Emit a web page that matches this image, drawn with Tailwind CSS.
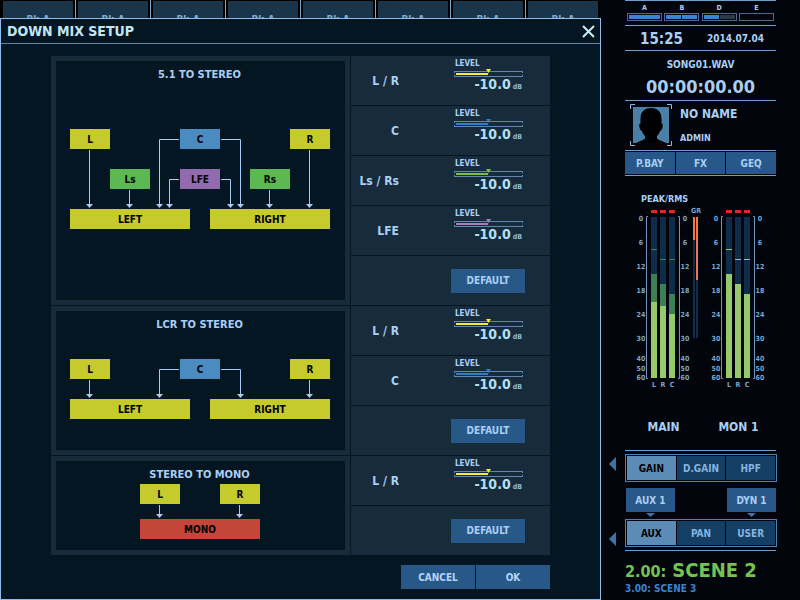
<!DOCTYPE html>
<html lang="en">
<head>
  <meta charset="UTF-8">
  <meta name="viewport" content="width=device-width, initial-scale=1.0">
  <title>Down Mix Setup</title>
  <script src="https://cdn.jsdelivr.net/npm/@tailwindcss/browser@4"></script>
</head>
<body class="min-h-screen flex bg-[#02060c] text-[#a9cff5] font-bold leading-none font-['DejaVu_Sans_Condensed','DejaVu_Sans',sans-serif]">

  <!-- Channel strip and dialog -->
  <div class="flex-1 min-w-0 flex flex-col">
    <div id="channels" class="grid grid-cols-8 h-[18px] mr-px overflow-hidden bg-black text-[10px] text-[#7fa9d0]"></div>

    <main class="flex-1 flex flex-col bg-[#051623] border border-[#8fbcea]">
      <header class="flex items-center justify-between h-[25px] pl-[6px] pr-[5px] border-b border-[#6186ad]">
        <h1 class="text-[14px] text-[#c3e6f5]">DOWN MIX SETUP</h1>
        <button type="button" aria-label="Close">
          <svg class="block w-[13px] h-[13px]" viewBox="0 0 13 13" fill="none" stroke="#c8ecf8" stroke-width="2">
            <path d="M1 1L12 12M12 1L1 12"/>
          </svg>
        </button>
      </header>

      <div class="w-[499px] mx-auto pt-[12px]">
        <!-- 5.1 to stereo -->
        <section class="flex border-b border-[#051623]">
          <div class="flex-1 border-5 border-[#182b3b]">
            <h2 class="pt-[8px] pr-[2px] text-[11px] text-center">5.1 TO STEREO</h2>
            <div class="relative w-[260px] h-[100px] ml-[14px] mt-[49px] text-[10px] text-black">
              <svg class="absolute inset-0" width="260" height="100" fill="none" stroke="#a3cbf3">
                <path d="M19.5 21V76M59.5 61V76M199.5 61V76M239.5 21V76M109 10.5H89.5V76M151 10.5H170.5V76M109 50.5H99.5V76M151 50.5H160.5V76"/>
                <path fill="#a3cbf3" stroke="none" d="M16 75h7l-3.5 4zM56 75h7l-3.5 4zM86 75h7l-3.5 4zM96 75h7l-3.5 4zM157 75h7l-3.5 4zM167 75h7l-3.5 4zM196 75h7l-3.5 4zM236 75h7l-3.5 4z"/>
              </svg>
              <div class="absolute left-0 top-0 w-[40px] h-[20px] pt-px flex items-center justify-center bg-[#c5cb2c]">L</div>
              <div class="absolute left-[110px] top-0 w-[40px] h-[20px] pt-px flex items-center justify-center bg-[#4a8cc0]">C</div>
              <div class="absolute left-[220px] top-0 w-[40px] h-[20px] pt-px flex items-center justify-center bg-[#c5cb2c]">R</div>
              <div class="absolute left-[40px] top-[40px] w-[40px] h-[20px] pt-px flex items-center justify-center bg-[#5bb852]">Ls</div>
              <div class="absolute left-[110px] top-[40px] w-[40px] h-[20px] pt-px flex items-center justify-center bg-[#926bae]">LFE</div>
              <div class="absolute left-[180px] top-[40px] w-[40px] h-[20px] pt-px flex items-center justify-center bg-[#5bb852]">Rs</div>
              <div class="absolute left-0 top-[80px] w-[120px] h-[20px] pt-px flex items-center justify-center bg-[#c5cb2c]">LEFT</div>
              <div class="absolute left-[140px] top-[80px] w-[120px] h-[20px] pt-px flex items-center justify-center bg-[#c5cb2c]">RIGHT</div>
            </div>
          </div>
          <div class="levels w-[200px] border-l border-[#051623]" data-rows="L / R:yellow,C:blue,Ls / Rs:green,LFE:purple"></div>
        </section>

        <!-- LCR to stereo -->
        <section class="flex border-b border-[#051623]">
          <div class="flex-1 border-5 border-[#182b3b]">
            <h2 class="pt-[8px] pr-[2px] text-[11px] text-center">LCR TO STEREO</h2>
            <div class="relative w-[260px] h-[60px] ml-[14px] mt-[29px] text-[10px] text-black">
              <svg class="absolute inset-0" width="260" height="60" fill="none" stroke="#a3cbf3">
                <path d="M19.5 21V36M239.5 21V36M109 10.5H89.5V36M151 10.5H170.5V36"/>
                <path fill="#a3cbf3" stroke="none" d="M16 35h7l-3.5 4zM86 35h7l-3.5 4zM167 35h7l-3.5 4zM236 35h7l-3.5 4z"/>
              </svg>
              <div class="absolute left-0 top-0 w-[40px] h-[20px] pt-px flex items-center justify-center bg-[#c5cb2c]">L</div>
              <div class="absolute left-[110px] top-0 w-[40px] h-[20px] pt-px flex items-center justify-center bg-[#4a8cc0]">C</div>
              <div class="absolute left-[220px] top-0 w-[40px] h-[20px] pt-px flex items-center justify-center bg-[#c5cb2c]">R</div>
              <div class="absolute left-0 top-[40px] w-[120px] h-[20px] pt-px flex items-center justify-center bg-[#c5cb2c]">LEFT</div>
              <div class="absolute left-[140px] top-[40px] w-[120px] h-[20px] pt-px flex items-center justify-center bg-[#c5cb2c]">RIGHT</div>
            </div>
          </div>
          <div class="levels w-[200px] border-l border-[#051623]" data-rows="L / R:yellow,C:blue"></div>
        </section>

        <!-- Stereo to mono -->
        <section class="flex">
          <div class="flex-1 border-5 border-[#182b3b]">
            <h2 class="pt-[8px] pr-[2px] text-[11px] text-center">STEREO TO MONO</h2>
            <div class="relative w-[120px] h-[55px] ml-[84px] mt-[4px] text-[10px] text-black">
              <svg class="absolute inset-0" width="120" height="55" fill="none" stroke="#a3cbf3">
                <path d="M19.5 21V31M99.5 21V31"/>
                <path fill="#a3cbf3" stroke="none" d="M16 30h7l-3.5 4zM96 30h7l-3.5 4z"/>
              </svg>
              <div class="absolute left-0 top-0 w-[40px] h-[20px] pt-px flex items-center justify-center bg-[#c5cb2c]">L</div>
              <div class="absolute left-[80px] top-0 w-[40px] h-[20px] pt-px flex items-center justify-center bg-[#c5cb2c]">R</div>
              <div class="absolute left-0 top-[35px] w-[120px] h-[20px] pt-px flex items-center justify-center bg-[#c44539]">MONO</div>
            </div>
          </div>
          <div class="levels w-[200px] border-l border-[#051623]" data-rows="L / R:yellow"></div>
        </section>

        <footer class="flex justify-end gap-px pt-[10px] text-[10px] text-[#b3d6fa]">
          <button type="button" class="w-[74px] h-[24px] pt-px bg-[#275888]">CANCEL</button>
          <button type="button" class="w-[74px] h-[24px] pt-px bg-[#275888]">OK</button>
        </footer>
      </div>
    </main>
  </div>

  <!-- Sidebar -->
  <aside class="w-[199px] pl-[8px] pr-[24px]">
    <!-- Banks -->
    <div class="ml-[16px] flex justify-between h-[26px] px-[2px] pt-[4px] border-y border-[#6f9dcd] text-[7px] text-center">
      <div class="w-[35px]">A
        <div class="h-[8px] mt-[1px] p-px border border-[#50688c]"><div class="h-full bg-[#3f83cc]"></div></div>
      </div>
      <div class="w-[35px]">B
        <div class="flex gap-px h-[8px] mt-[1px] p-px border border-[#50688c]"><div class="flex-1 bg-[#3f83cc]"></div><div class="flex-1 bg-[#3f83cc]"></div></div>
      </div>
      <div class="w-[35px]">D
        <div class="flex gap-px h-[8px] mt-[1px] p-px border border-[#50688c]"><div class="flex-1 bg-[#3f83cc]"></div><div class="flex-1 bg-[#2c3a4a]"></div></div>
      </div>
      <div class="w-[35px]">E
        <div class="h-[8px] mt-[1px] border border-[#50688c]"></div>
      </div>
    </div>

    <!-- Clock -->
    <div class="ml-[16px] flex items-center justify-between h-[25px] pt-[2px] pl-[15px] pr-[12px] border-b border-[#6f9dcd]">
      <time class="text-[15px]">15:25</time>
      <time class="text-[10px]">2014.07.04</time>
    </div>

    <!-- Player -->
    <div class="ml-[16px] h-[50px] pt-[9px] border-b border-[#6f9dcd] text-center">
      <p class="text-[10px]">SONG01.WAV</p>
      <p class="mt-[8px] text-[18px]">00:00:00.00</p>
    </div>

    <!-- User -->
    <div class="ml-[16px] flex h-[50px] pl-[5px] pt-[3px] border-b border-[#6f9dcd]">
      <svg class="w-[42px] h-[42px]" viewBox="0 0 42 42">
        <path fill="none" stroke="#8ab8e6" d="M.5 5V.5H5M37 .5H41.5V5M41.5 37V41.5H37M5 41.5H.5V37"/>
        <path fill="#4a80a8" d="M3 3h36v36H3z"/>
        <path d="M21 4c-7 0-10.500 4.500-10.500 10.500v5c-1.500 0-1.500 2-1 4 .4 2 1 3.200 2.300 3.200 .8 2.500 2 4 3.200 5.300v2.500c-2 2-5.500 2.500-9 4.500h30c-3.500-2-7-2.500-9-4.500v-2.500c1.200-1.300 2.400-2.800 3.200-5.300 1.300 0 1.900-1.200 2.300-3.200 .5-2 .5-4-1-4v-5C31.500 8.500 28 4 21 4z"/>
      </svg>
      <div class="pl-[8px] pt-[4px]">
        <p class="text-[12px]">NO NAME</p>
        <p class="mt-[14px] text-[9px]">ADMIN</p>
      </div>
    </div>

    <nav class="ml-[16px] grid grid-cols-3 gap-px h-[25px] py-px border-b border-[#6f9dcd] text-[10px]">
      <button type="button" class="pt-px bg-[#275888]">P.BAY</button>
      <button type="button" class="pt-px bg-[#275888]">FX</button>
      <button type="button" class="pt-px bg-[#275888]">GEQ</button>
    </nav>

    <!-- Meters -->
    <h2 class="ml-[32px] mt-[19px] text-[9px]">PEAK/RMS</h2>
    <div class="ml-[27px] flex">
      <div id="main-meter" class="w-[54px] pt-[6px]"></div>
      <div class="w-[21px] pl-px pr-[11px] pt-[4px] text-[7px] text-[#7ba6cc]">GR
        <div class="flex gap-px pl-[2px] mt-[2px]">
          <div class="w-[2px] h-[121px] bg-[#0f2c49]"><div class="bg-[#f07848]" style="height:23px"></div></div>
          <div class="w-[2px] h-[121px] bg-[#0f2c49]"><div class="bg-[#f07848]" style="height:63px"></div></div>
        </div>
      </div>
      <div id="mon-meter" class="w-[54px] pt-[6px]"></div>
    </div>
    <div class="ml-[17px] mt-[32px] grid grid-cols-2 text-[12px] text-center">
      <p>MAIN</p>
      <p>MON 1</p>
    </div>

    <!-- Encoder assign -->
    <div class="ml-[16px] mt-[17px] border-t border-[#6f9dcd]"></div>
    <div class="flex items-center mt-[3px] -mr-px">
      <svg class="w-[7px] h-[14px] mr-[9px] -mt-[8px]" viewBox="0 0 7 14" fill="#3f73a5"><path d="M7 0v14L0 7z"/></svg>
      <div class="flex-1 grid grid-cols-3 gap-px h-[28px] p-px border border-[#4f80b0] text-[10px] text-[#86b4e0]">
        <button type="button" class="pt-px bg-[#5b8cb8] text-black">GAIN</button>
        <button type="button" class="pt-px bg-[#143e63]">D.GAIN</button>
        <button type="button" class="pt-px bg-[#143e63]">HPF</button>
      </div>
    </div>
    <div class="ml-[17px] mt-[6px] flex justify-between text-[10px]">
      <div>
        <button type="button" class="block w-[49px] h-[24px] pt-px bg-[#275888]">AUX 1</button>
        <svg class="block w-[9px] h-[4px] mx-auto mt-px" viewBox="0 0 9 4" fill="#3f73a5"><path d="M0 0h9L4.500 4z"/></svg>
      </div>
      <div>
        <button type="button" class="block w-[49px] h-[24px] pt-px bg-[#275888]">DYN 1</button>
        <svg class="block w-[9px] h-[4px] mx-auto mt-px" viewBox="0 0 9 4" fill="#3f73a5"><path d="M0 0h9L4.500 4z"/></svg>
      </div>
    </div>
    <div class="flex items-center mt-[2px] -mr-px">
      <svg class="w-[7px] h-[14px] mr-[9px] mt-[12px]" viewBox="0 0 7 14" fill="#3f73a5"><path d="M7 0v14L0 7z"/></svg>
      <div class="flex-1 grid grid-cols-3 gap-px h-[28px] p-px border border-[#4f80b0] text-[10px] text-[#86b4e0]">
        <button type="button" class="pt-px bg-[#5b8cb8] text-black">AUX</button>
        <button type="button" class="pt-px bg-[#143e63]">PAN</button>
        <button type="button" class="pt-px bg-[#143e63]">USER</button>
      </div>
    </div>
    <div class="ml-[16px] mt-[3px] border-t border-[#6f9dcd]"></div>

    <!-- Scene -->
    <div class="ml-[16px] mt-[9px] flex items-baseline gap-[6px] whitespace-nowrap text-[#76c250]">
      <span class="text-[16px]">2.00:</span>
      <span class="text-[20px]">SCENE 2</span>
    </div>
    <p class="ml-[16px] mt-[4px] text-[10px] text-[#3b84d0]">3.00: SCENE 3</p>
  </aside>

  <script>
    // Channel tabs behind the dialog
    document.getElementById('channels').innerHTML = Array(8).fill(`
      <div class="h-[18px] px-[2px] pt-px overflow-hidden border-l border-[#7fa6d0] first:border-black">
        <div class="h-full pt-[14px] bg-[#1a3549] text-center">Bk.A</div>
      </div>`).join('');

    // Level rows
    const fills = {
      yellow: ['bg-[#f2ec38]', '#f2ec38'],
      blue: ['bg-[#2f7dcb]', '#2f7dcb'],
      green: ['bg-[#7cc043]', '#7cc043'],
      purple: ['bg-[#a780bb]', '#a780bb'],
    };
    document.querySelectorAll('.levels').forEach(el => {
      const rows = el.dataset.rows.split(',').map(r => {
        const [name, color] = r.split(':');
        const [bg, hex] = fills[color];
        return `
          <div class="flex justify-between h-[50px] pr-[27px] bg-[#182b3b] border-b border-[#051623]">
            <div class="w-[48px] pt-[19px] text-[12px] text-right whitespace-nowrap">${name}</div>
            <div class="w-[69px] pt-[4px]">
              <div class="pl-px text-[8px]">LEVEL</div>
              <div class="relative h-[6px] mt-[3px] p-px border-y border-[#6186ad]" role="meter" aria-label="${name} level" aria-valuenow="-10" aria-valuemin="-90" aria-valuemax="10">
                <div class="h-[2px] ml-px ${bg}" style="width:32px"></div>
                <svg class="absolute -top-px left-0" width="69" height="6" fill="none" stroke="#6186ad"><path d="M.5 0V2M.5 4V6M68.500 0V2M68.500 4V6"/></svg>
                <svg class="absolute -top-[3px] left-[32px]" width="5" height="4" fill="${hex}"><path d="M0 0h5L2.500 4z"/></svg>
              </div>
              <div class="flex items-baseline justify-end gap-[2px] pr-px text-[#b0e0f4]"><span class="text-[14px]">-10.0</span><span class="text-[7px] text-[#8fbcd8]">dB</span></div>
            </div>
          </div>`;
      });
      rows.push(`
        <div class="flex justify-end items-center h-[49px] pr-[25px] bg-[#182b3b]">
          <button type="button" class="w-[74px] h-[24px] pt-px text-[10px] bg-[#275888]">DEFAULT</button>
        </div>`);
      el.innerHTML = rows.join('');
    });

    // Peak meters: peak line, peak top and rms top in px below 0 dB
    const scale = `
      <div class="w-[10px] pt-[4px] text-[7px] leading-[10px] text-[#7ba6cc] text-center">
        <p>0</p><p class="mt-[14px]">6</p><p class="mt-[14px]">12</p><p class="mt-[14px]">18</p><p class="mt-[14px]">24</p>
        <p class="mt-[14px]">30</p><p class="mt-[10px]">40</p><p>50</p><p class="-mt-px">60</p>
      </div>`;
    function meter(id, line, bars) {
      document.getElementById(id).innerHTML = `
        <div class="flex">
          ${scale}
          <div class="relative flex-1 px-[5px]">
            <svg class="absolute left-0 top-[6px]" width="34" height="163" fill="none" stroke="#6f94c4"><path d="M2 .5H.5V162.500H2M32 .5H33.500V162.500H32"/></svg>
            <div class="flex justify-between text-[7px] text-[#7ba6cc] text-center">
              ${bars.map(([name, peak, top, rms]) => `
                <div class="w-[6px]">
                  <div class="h-[3px] bg-[#e02820]"></div>
                  <div class="relative h-[161px] mt-[4px] bg-[#0f2c49]">
                    <div class="absolute inset-x-0 h-px ${line}" style="top:${peak}px"></div>
                    <div class="absolute inset-x-0 bottom-0 bg-[#3d8058]" style="top:${top}px"></div>
                    <div class="absolute inset-x-0 bottom-0 bg-[#97c96c]" style="top:${rms}px"></div>
                  </div>
                  <div class="mt-[4px]">${name}</div>
                </div>`).join('')}
            </div>
          </div>
          ${scale}
        </div>`;
    }
    meter('main-meter', 'bg-[#3d8058]', [['L', 32, 57, 85], ['R', 42, 67, 89], ['C', 42, 77, 97]]);
    meter('mon-meter', 'bg-[#97c96c]', [['L', 32, 57, 57], ['R', 42, 67, 67], ['C', 42, 77, 77]]);
  </script>
</body>
</html>
